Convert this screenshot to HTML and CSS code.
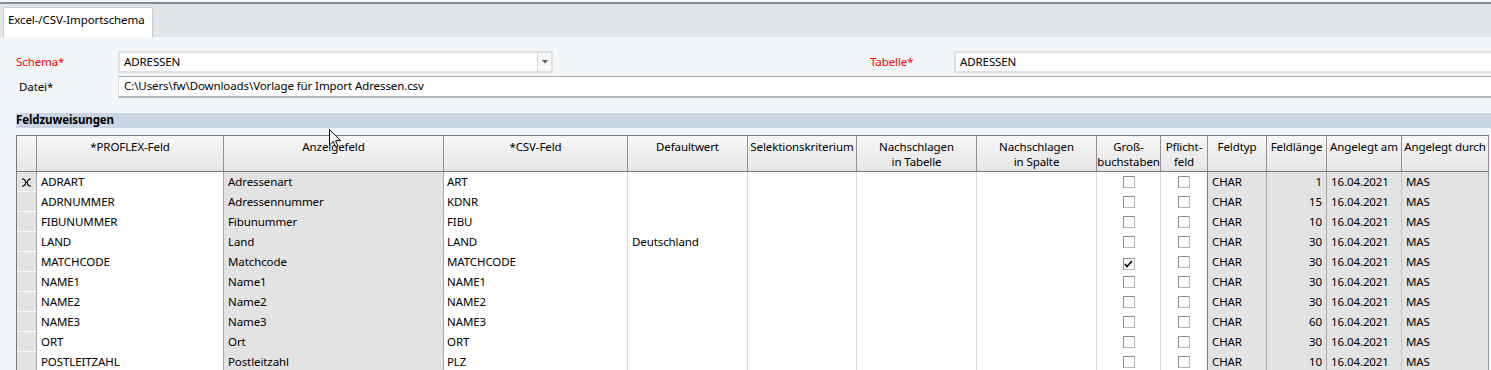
FILE: index.html
```html
<!DOCTYPE html>
<html lang="de">

<head>
    <meta charset="UTF-8">
    <meta name="viewport" content="width=device-width, initial-scale=1.0">
    <title>Excel-/CSV-Importschema</title>
    <link rel="stylesheet" href="styles.css">
</head>

<body>
    <!-- 탭 -->
    <div class="tabbar">
        <div class="tab">Excel-/CSV-Importschema</div>
    </div>

    <div class="content">
        <!-- 폼 -->
        <div class="form">
            <div class="row">
                <label class="lbl req">Schema*</label>
                <div class="combo">
                    <span class="val">ADRESSEN</span>
                    <span class="drop"><svg width="6" height="4" viewBox="0 0 6 4"><path d="M0 0H6L3 3.5Z" fill="#606060"/></svg></span>
                </div>
                <label class="lbl req lbl-tab">Tabelle*</label>
                <div class="edit">ADRESSEN</div>
            </div>
            <div class="row">
                <label class="lbl lbl-datei">Datei*</label>
                <div class="edit edit-file">C:\Users\fw\Downloads\Vorlage für Import Adressen.csv</div>
            </div>
        </div>

        <div class="section">Feldzuweisungen</div>

        <!-- 그리드 -->
        <div class="gridwrap">
            <table class="grid">
                <colgroup>
                    <col style="width:20px">
                    <col style="width:187px">
                    <col style="width:220px">
                    <col style="width:184px">
                    <col style="width:120px">
                    <col style="width:109px">
                    <col style="width:120px">
                    <col style="width:120px">
                    <col style="width:64px">
                    <col style="width:47px">
                    <col style="width:59px">
                    <col style="width:60px">
                    <col style="width:75px">
                    <col style="width:87px">
                </colgroup>
                <thead>
                    <tr>
                        <th class="ind"></th>
                        <th>*PROFLEX-Feld</th>
                        <th>Anzeigefeld</th>
                        <th>*CSV-Feld</th>
                        <th>Defaultwert</th>
                        <th>Selektionskriterium</th>
                        <th>Nachschlagen<br>in Tabelle</th>
                        <th>Nachschlagen<br>in Spalte</th>
                        <th>Groß-<br>buchstaben</th>
                        <th>Pflicht-<br>feld</th>
                        <th>Feldtyp</th>
                        <th>Feldlänge</th>
                        <th>Angelegt am</th>
                        <th>Angelegt durch</th>
                    </tr>
                </thead>
                <tbody>
                    <tr>
                        <td class="ind"><svg width="9" height="9" viewBox="0 0 9 9"><path d="M0 1H1.5Q3.8 2.5 3.8 4.5Q3.8 6.5 1.5 8H0M9 1H7.5Q5.2 2.5 5.2 4.5Q5.2 6.5 7.5 8H9M3.5 4.5H5.5" fill="none" stroke="#000" stroke-width="1.1"/></svg></td>
                        <td>ADRART</td>
                        <td class="ro">Adressenart</td>
                        <td class="csv">ART</td>
                        <td></td><td></td><td></td><td></td>
                        <td class="chk"><span class="box"></span></td>
                        <td class="chk"><span class="box"></span></td>
                        <td class="ro typ">CHAR</td>
                        <td class="ro num">1</td>
                        <td class="ro lite">16.04.2021</td>
                        <td class="ro last">MAS</td>
                    </tr>
                    <tr>
                        <td class="ind"></td>
                        <td>ADRNUMMER</td>
                        <td class="ro">Adressennummer</td>
                        <td class="csv">KDNR</td>
                        <td></td><td></td><td></td><td></td>
                        <td class="chk"><span class="box"></span></td>
                        <td class="chk"><span class="box"></span></td>
                        <td class="ro typ">CHAR</td>
                        <td class="ro num">15</td>
                        <td class="ro lite">16.04.2021</td>
                        <td class="ro last">MAS</td>
                    </tr>
                    <tr>
                        <td class="ind"></td>
                        <td>FIBUNUMMER</td>
                        <td class="ro">Fibunummer</td>
                        <td class="csv">FIBU</td>
                        <td></td><td></td><td></td><td></td>
                        <td class="chk"><span class="box"></span></td>
                        <td class="chk"><span class="box"></span></td>
                        <td class="ro typ">CHAR</td>
                        <td class="ro num">10</td>
                        <td class="ro lite">16.04.2021</td>
                        <td class="ro last">MAS</td>
                    </tr>
                    <tr>
                        <td class="ind"></td>
                        <td>LAND</td>
                        <td class="ro">Land</td>
                        <td class="csv">LAND</td>
                        <td>Deutschland</td><td></td><td></td><td></td>
                        <td class="chk"><span class="box"></span></td>
                        <td class="chk"><span class="box"></span></td>
                        <td class="ro typ">CHAR</td>
                        <td class="ro num">30</td>
                        <td class="ro lite">16.04.2021</td>
                        <td class="ro last">MAS</td>
                    </tr>
                    <tr>
                        <td class="ind"></td>
                        <td>MATCHCODE</td>
                        <td class="ro">Matchcode</td>
                        <td class="csv">MATCHCODE</td>
                        <td></td><td></td><td></td><td></td>
                        <td class="chk"><span class="box on"><svg width="9" height="8" viewBox="0 0 9 8"><path d="M1 4L3 6.5L8 1" fill="none" stroke="#000" stroke-width="1.6"/></svg></span></td>
                        <td class="chk"><span class="box"></span></td>
                        <td class="ro typ">CHAR</td>
                        <td class="ro num">30</td>
                        <td class="ro lite">16.04.2021</td>
                        <td class="ro last">MAS</td>
                    </tr>
                    <tr>
                        <td class="ind"></td>
                        <td>NAME1</td>
                        <td class="ro">Name1</td>
                        <td class="csv">NAME1</td>
                        <td></td><td></td><td></td><td></td>
                        <td class="chk"><span class="box"></span></td>
                        <td class="chk"><span class="box"></span></td>
                        <td class="ro typ">CHAR</td>
                        <td class="ro num">30</td>
                        <td class="ro lite">16.04.2021</td>
                        <td class="ro last">MAS</td>
                    </tr>
                    <tr>
                        <td class="ind"></td>
                        <td>NAME2</td>
                        <td class="ro">Name2</td>
                        <td class="csv">NAME2</td>
                        <td></td><td></td><td></td><td></td>
                        <td class="chk"><span class="box"></span></td>
                        <td class="chk"><span class="box"></span></td>
                        <td class="ro typ">CHAR</td>
                        <td class="ro num">30</td>
                        <td class="ro lite">16.04.2021</td>
                        <td class="ro last">MAS</td>
                    </tr>
                    <tr>
                        <td class="ind"></td>
                        <td>NAME3</td>
                        <td class="ro">Name3</td>
                        <td class="csv">NAME3</td>
                        <td></td><td></td><td></td><td></td>
                        <td class="chk"><span class="box"></span></td>
                        <td class="chk"><span class="box"></span></td>
                        <td class="ro typ">CHAR</td>
                        <td class="ro num">60</td>
                        <td class="ro lite">16.04.2021</td>
                        <td class="ro last">MAS</td>
                    </tr>
                    <tr>
                        <td class="ind"></td>
                        <td>ORT</td>
                        <td class="ro">Ort</td>
                        <td class="csv">ORT</td>
                        <td></td><td></td><td></td><td></td>
                        <td class="chk"><span class="box"></span></td>
                        <td class="chk"><span class="box"></span></td>
                        <td class="ro typ">CHAR</td>
                        <td class="ro num">30</td>
                        <td class="ro lite">16.04.2021</td>
                        <td class="ro last">MAS</td>
                    </tr>
                    <tr>
                        <td class="ind"></td>
                        <td>POSTLEITZAHL</td>
                        <td class="ro">Postleitzahl</td>
                        <td class="csv">PLZ</td>
                        <td></td><td></td><td></td><td></td>
                        <td class="chk"><span class="box"></span></td>
                        <td class="chk"><span class="box"></span></td>
                        <td class="ro typ">CHAR</td>
                        <td class="ro num">10</td>
                        <td class="ro lite">16.04.2021</td>
                        <td class="ro last">MAS</td>
                    </tr>
                </tbody>
            </table>
            <!-- 마우스 커서 -->
            <svg class="cursor" width="12" height="19" viewBox="0 0 12 19"><path d="M0.5 0.5V16L4.2 12.4L6.8 18.2L9 17.2L6.5 11.6H11.5Z" fill="#fff" stroke="#000" stroke-width="1"/></svg>
        </div>
    </div>
</body>

</html>
```

FILE: styles.css
```css
/* reset */
* {
    margin: 0;
    padding: 0;
    box-sizing: border-box;
}

body {
    width: 1491px;
    height: 370px;
    overflow: hidden;
    background: #f3f6f9;
    font-family: "Noto Sans", sans-serif;
    font-size: 11.5px;
    letter-spacing: -0.1px;
    color: #000;
}

/* 탭 */
.tabbar {
    margin-top: 2px;
    height: 35px;
    padding: 3px 0 0 3px;
    background: #e1e5e8;
    border-top: 2px solid #8a8a8a;
}

.tab {
    width: 150px;
    height: 30px;
    padding: 3px 0 0 4px;
    line-height: 17px;
    background: #fff;
    border: 1px solid #c9cdd1;
    border-bottom: none;
    border-radius: 2px 2px 0 0;
    white-space: nowrap;
}

/* 폼 */
.form {
    padding: 14px 0 0 16px;
}

.row {
    display: flex;
    align-items: center;
    height: 22px;
    padding-bottom: 1px;
}

.row + .row {
    margin-top: 3px;
}

.lbl {
    width: 102px;
    flex: none;
}

.req {
    color: #f00;
}

.lbl-tab {
    width: 84px;
    margin-left: 317px;
}

.lbl-datei {
    padding-left: 3px;
}

.combo,
.edit {
    display: flex;
    align-items: center;
    height: 22px;
    padding-bottom: 1px;
    background: #fff;
    border: 2px solid #dde0e3;
}

.combo {
    width: 435px;
    flex: none;
    padding-bottom: 0;
}

.combo .val,
.edit {
    padding-left: 4px;
}

.combo .val {
    flex: 1;
    padding-bottom: 1px;
}

.drop {
    display: flex;
    align-items: center;
    justify-content: center;
    width: 14px;
    height: 100%;
    background: #f7f7f7;
    border-left: 1px solid #d2d4d6;
}

.edit {
    flex: 1;
    margin-right: -3px;
}

.edit-file {
    border-width: 1px 1px 2px 1px;
    border-top-color: #a9a9a9;
    border-bottom-color: #b4b4b4;
    padding-left: 5px;
}

/* 섹션 */
.section {
    margin: 15px 0 0 16px;
    height: 15px;
    line-height: 14px;
    background: #c9d5e2;
    font-weight: bold;
}

/* 그리드 */
.gridwrap {
    position: relative;
    margin: 7px 0 0 16px;
}

.grid {
    table-layout: fixed;
    width: 1473px;
    border-collapse: separate;
    border-spacing: 0;
    border-top: 1px solid #7c7c7c;
    border-left: 1px solid #7c7c7c;
    background: #fff;
}

.grid th {
    height: 36px;
    padding-top: 3px;
    vertical-align: top;
    line-height: 15px;
    font-weight: normal;
    white-space: nowrap;
    overflow: hidden;
    background: linear-gradient(#f7f7f7, #e5e5e5);
    border-right: 1px solid #9a8d8d;
    border-bottom: 1px solid #7f7272;
}

.grid td {
    height: 20px;
    padding: 0 4px 1px;
    line-height: 18px;
    white-space: nowrap;
    overflow: hidden;
    border-right: 1px solid #d6d6d6;
}

.grid td.ind {
    padding: 0;
    text-align: center;
    background: #e3e3e3;
    border-right: 1px solid #a3a3a3;
    border-bottom: 1px solid #f7f7f7;
}

.grid td.ind svg {
    vertical-align: -1px;
}

/* PROFLEX 열 */
.grid td:nth-child(2) {
    border-right: 1px solid #a6a6a6;
}

/* 읽기 전용 열 */
.grid td.ro {
    background: #e3e3e3;
    border-right: 1px solid #a6a6a6;
}

.grid td.lite {
    border-right-color: #c4c4c4;
}

.grid td.last {
    border-right-color: #9b9b9b;
}

.grid td.csv {
    padding-left: 3px;
}

.grid td.num {
    text-align: right;
}

/* 체크박스 */
.grid td.chk {
    padding: 0;
    text-align: center;
}

.grid td.chk:nth-child(10) {
    border-right: 1px solid #808080;
}

.box {
    display: inline-flex;
    align-items: center;
    justify-content: center;
    width: 12px;
    height: 12px;
    vertical-align: -2px;
    background: #fff;
    border: 1px solid #b5b5b5;
    border-top-color: #8f8f8f;
    border-left-color: #8f8f8f;
}

.cursor {
    position: absolute;
    left: 313px;
    top: -6px;
}
```
